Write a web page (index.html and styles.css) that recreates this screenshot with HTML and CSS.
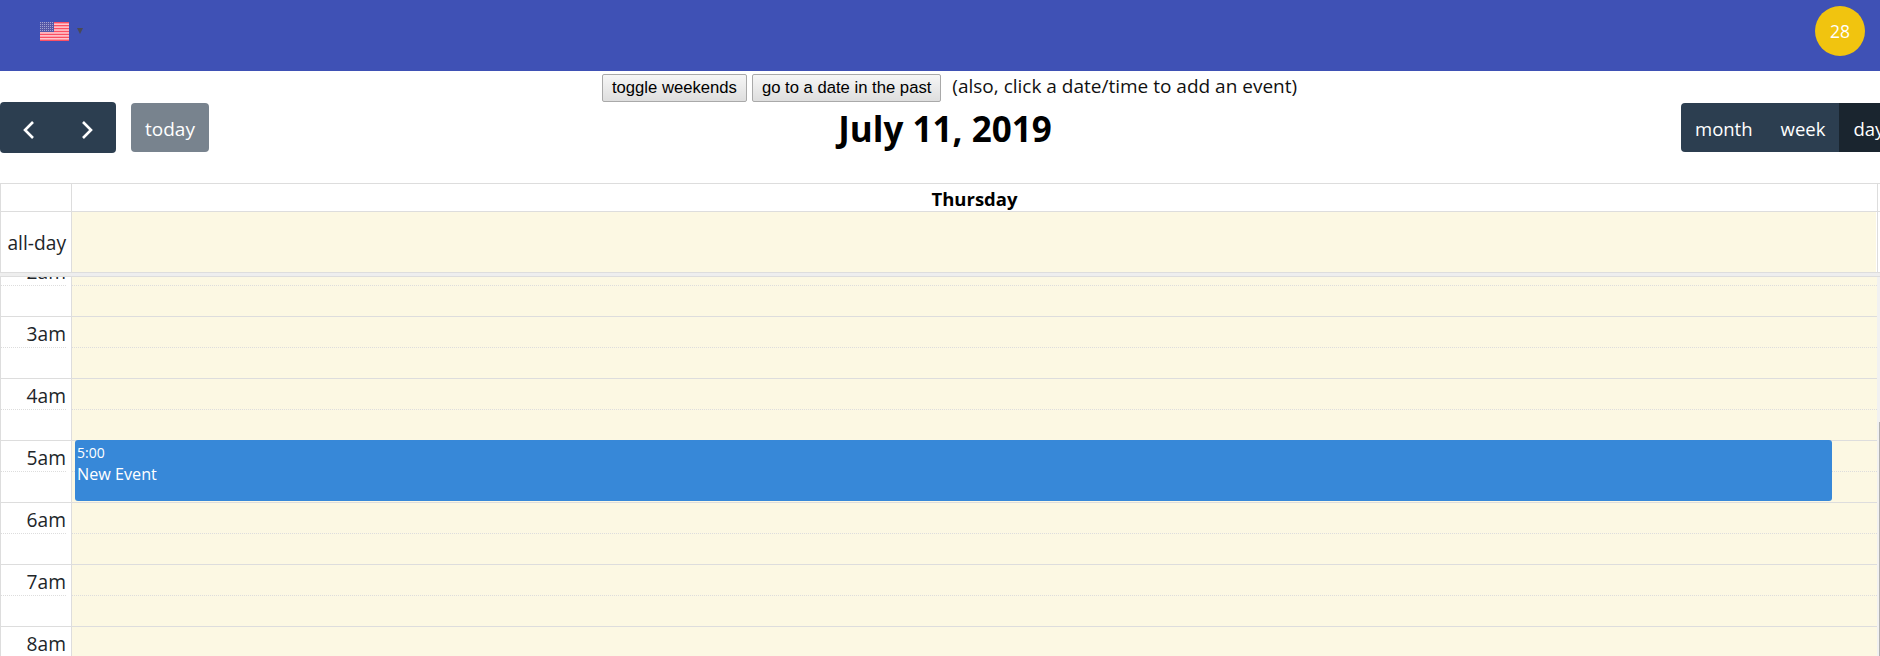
FILE: index.html
```html
<!DOCTYPE html>
<html lang="en">
<head>
<meta charset="utf-8">
<title>Calendar</title>
<link rel="stylesheet" href="styles.css">
</head>
<body>
<header class="navbar">
  <div class="lang">
    <svg class="flag" width="29" height="19" viewBox="0 0 29 19" aria-hidden="true">
      <defs>
        <pattern id="stars" width="2" height="2" patternUnits="userSpaceOnUse">
          <rect width="2" height="2" fill="#5658a6"/>
          <rect width="1" height="1" fill="#a3a4d2"/>
        </pattern>
      </defs>
      <rect width="29" height="19" fill="#ffd3d7"/>
      <g fill="#fb4f63">
        <rect y="0" width="29" height="1.46"/><rect y="2.92" width="29" height="1.46"/><rect y="5.85" width="29" height="1.46"/><rect y="8.77" width="29" height="1.46"/><rect y="11.69" width="29" height="1.46"/><rect y="14.62" width="29" height="1.46"/><rect y="17.54" width="29" height="1.46"/>
      </g>
      <rect width="14" height="10" fill="url(#stars)"/>
    </svg>
    <span class="caret"></span>
  </div>
  <div class="badge">28</div>
</header>
<main class="demo">
  <div class="demo-top">
    <button class="plain" type="button">toggle weekends</button>
    <button class="plain" type="button">go to a date in the past</button>
    <span class="hint">(also, click a date/time to add an event)</span>
  </div>
  <div class="toolbar">
    <div class="left">
      <div class="navgroup">
        <span class="chev"><svg width="16" height="20" viewBox="0 0 16 20"><path d="M12 2 4 10l8 8" fill="none" stroke="#fff" stroke-width="2.6"/></svg></span>
        <span class="chev"><svg width="16" height="20" viewBox="0 0 16 20"><path d="M4 2l8 8-8 8" fill="none" stroke="#fff" stroke-width="2.6"/></svg></span>
      </div>
      <button class="today" type="button">today</button>
    </div>
    <h2 class="title">July 11, 2019</h2>
    <div class="views">
      <button class="view" type="button">month</button>
      <button class="view" type="button">week</button>
      <button class="view active" type="button">day</button>
    </div>
  </div>
  <section class="cal">
    <div class="row head">
      <div class="axis"></div>
      <div class="col"><b>Thursday</b></div>
    </div>
    <div class="row allday">
      <div class="axis">all-day</div>
      <div class="col today-col"></div>
    </div>
    <div class="divider"></div>
    <div class="scroller">
      <div class="viewport">
        <div class="grid">
          <div class="hour"><div class="axis"><div class="half">2am</div></div><div class="col today-col"><div class="half"></div></div></div>
          <div class="hour"><div class="axis"><div class="half">3am</div></div><div class="col today-col"><div class="half"></div></div></div>
          <div class="hour"><div class="axis"><div class="half">4am</div></div><div class="col today-col"><div class="half"></div></div></div>
          <div class="hour"><div class="axis"><div class="half">5am</div></div><div class="col today-col"><div class="half"></div></div></div>
          <div class="hour"><div class="axis"><div class="half">6am</div></div><div class="col today-col"><div class="half"></div></div></div>
          <div class="hour"><div class="axis"><div class="half">7am</div></div><div class="col today-col"><div class="half"></div></div></div>
          <div class="hour"><div class="axis"><div class="half">8am</div></div><div class="col today-col"><div class="half"></div></div></div>
          <div class="event">
            <div class="event-time">5:00</div>
            <div class="event-title">New Event</div>
          </div>
        </div>
      </div>
      <div class="track"><div class="thumb"></div></div>
    </div>
  </section>
</main>
</body>
</html>
```

FILE: styles.css
```css
* { box-sizing: border-box; }
html, body { margin: 0; height: 656px; overflow: hidden; background: #fff; }
body { font-family: "Open Sans", "Noto Sans", sans-serif; color: #212529; font-size: 19px; }

.navbar { height: 71px; background: #3f51b5; display: flex; justify-content: space-between; padding: 6px 15px 0 40px; }
.lang { display: flex; align-items: flex-start; padding-top: 16px; }
.flag { display: block; }
.caret { width: 0; height: 0; margin: 6px 0 0 8px; border: 3.5px solid transparent; border-top: 6px solid #4a4a55; border-bottom: 0; }
.badge { width: 50px; height: 50px; border-radius: 50%; background: #f1c40f; color: #fff; display: flex; align-items: center; justify-content: center; font-size: 17.500px; }

.demo-top { height: 31px; display: flex; justify-content: center; align-items: flex-start; padding: 3px 0 0 19px; gap: 5px; }
.plain { height: 28px; padding: 0 9px; font: 16.670px "Liberation Sans", Arial, sans-serif; color: #000; background: linear-gradient(#f6f6f6, #dedede); border: 1px solid #a9a9a9; border-radius: 2px; }
.hint { margin-left: 6px; font-size: 19px; line-height: 24px; color: #111; }

.toolbar { height: 81px; display: flex; align-items: flex-start; width: 1920px; position: relative; }
.left { width: 1681px; flex: none; display: flex; align-items: flex-start; gap: 15px; }
.navgroup { width: 116px; height: 51px; padding-top: 4px; background: #2c3e50; border-radius: 4px; display: flex; align-items: center; }
.chev { width: 58px; display: flex; justify-content: center; }
.today { width: 78px; height: 49px; margin-top: 1px; border: 0; border-radius: 4px; background: #78838e; color: #fff; font: 19px "Open Sans", sans-serif; padding: 2px 0 0; }
.title { position: absolute; left: 0; width: 1890px; top: 1px; margin: 0; text-align: center; font-size: 35px; line-height: 51px; font-weight: 700; color: #000; pointer-events: none; }
.views { display: flex; height: 49px; margin-top: 1px; flex: none; }
.view { height: 49px; border: 0; background: #2c3e50; color: #fff; font: 18.500px "Open Sans", sans-serif; padding: 2px 14px 0; }
.view:first-child { border-radius: 4px 0 0 4px; }
.view.active { background: #1a252f; }

.cal { width: 1880px; border-top: 1px solid #ddd; }
.row { display: flex; padding-right: 2px; }
.head { height: 28px; border-bottom: 1px solid #ddd; }
.allday { height: 60px; }
.axis { width: 71px; flex: none; border-left: 1px solid #ddd; text-align: right; padding-right: 5px; font-size: 19.200px; color: #212529; }
.col { flex: 1; border-left: 1px solid #ddd; }
.row .col { border-right: 1px solid #ddd; }
.head .col { text-align: center; line-height: 29px; font-size: 18.500px; color: #000; }
.allday .axis { line-height: 62px; }
.allday .col { box-shadow: inset -1px 0 0 #fff; }
.today-col { background: #fcf8e3; }
.divider { height: 5px; background: #eee; border-top: 1px solid #ddd; border-bottom: 1px solid #ddd; }
.scroller { height: 379px; display: flex; overflow: hidden; }
.viewport { flex: 1; overflow: hidden; }
.track { width: 3px; flex: none; background: #f1f1f1; padding: 145px 0 0 2px; }
.thumb { height: 234px; background: #b0b0b0; }
.grid { position: relative; margin-top: -22px; }
.hour { display: flex; height: 62px; border-bottom: 1px solid #ddd; }
.half { height: 31px; line-height: 33px; border-bottom: 1px dotted #ddd; }
.event { position: absolute; left: 75px; width: 1757px; top: 185px; height: 61px; background: #3788d8; border-radius: 3px; color: #fff; padding: 3px 2px; }
.event-time { font-size: 14px; line-height: 20px; }
.event-title { font-size: 16.200px; line-height: 23px; }
```
